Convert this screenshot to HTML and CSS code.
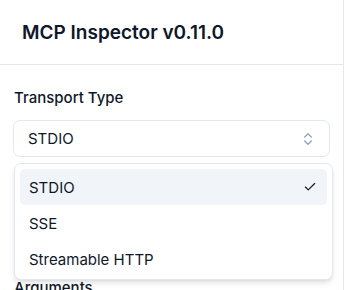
FILE: index.html
```
<!DOCTYPE html>
<html lang="en">
<head>
    <meta charset="UTF-8">
    <meta name="viewport" content="width=device-width, initial-scale=1.0">
    <title>MCP Inspector</title>
    <link rel="stylesheet" href="styles.css">
</head>
<body>
    <div class="sidebar">
        <div class="sidebar-header">
            <h1>MCP Inspector v0.11.0</h1>
        </div>
        <div class="sidebar-body">
            <div class="form-group">
                <label>Transport Type</label>
                <div class="select-wrap">
                    <button class="select-trigger">
                        <span>STDIO</span>
                        <svg class="chevrons" width="16" height="16" viewBox="0 0 24 24" fill="none" stroke="currentColor" stroke-width="2" stroke-linecap="round" stroke-linejoin="round"><path d="m7 15 5 5 5-5"/><path d="m7 9 5-5 5 5"/></svg>
                    </button>
                    <div class="select-menu">
                        <div class="select-item active">
                            <span>STDIO</span>
                            <svg width="14" height="14" viewBox="0 0 24 24" fill="none" stroke="currentColor" stroke-width="2" stroke-linecap="round" stroke-linejoin="round"><path d="M20 6 9 17l-5-5"/></svg>
                        </div>
                        <div class="select-item"><span>SSE</span></div>
                        <div class="select-item"><span>Streamable HTTP</span></div>
                    </div>
                </div>
            </div>
            <!-- command field sits under the open menu -->
            <div class="form-group args">
                <label>Arguments</label>
                <input type="text" class="text-input">
            </div>
        </div>
    </div>
</body>
</html>
```

FILE: styles.css
```
body {
    margin: 0;
    font-family: Inter, "Noto Sans", sans-serif;
    color: #0f172a;
    background-color: white;
}
.sidebar {
    width: 343px;
    height: 100vh;
    border-right: 1px solid #e5e7eb;
    overflow: hidden;
}
.sidebar-header {
    height: 64px;
    border-bottom: 1px solid #e5e7eb;
    display: flex;
    align-items: center;
    padding-left: 22px;
}
.sidebar-header h1 {
    margin: 0;
    font-size: 19px;
    font-weight: 600;
}
.sidebar-body {
    padding: 24px 13px 0 13px;
    display: flex;
    flex-direction: column;
    gap: 18px;
}
.form-group label {
    display: block;
    font-size: 15px;
    line-height: 18px;
    font-weight: 500;
    margin-bottom: 13px;
    padding-left: 1px;
}
.form-group.args {
    margin-top: 104px;
}
.select-wrap {
    position: relative;
}
.select-trigger {
    width: 100%;
    height: 37px;
    display: flex;
    align-items: center;
    justify-content: space-between;
    padding: 0 13px 0 14px;
    border: 1px solid #e2e8f0;
    border-radius: 7px;
    background: white;
    font-family: inherit;
    font-size: 15px;
    color: #0f172a;
}
.chevrons {
    color: #94a3b8;
}
.select-menu {
    position: absolute;
    top: 43px;
    left: 1px;
    width: 319px;
    box-sizing: border-box;
    padding: 5px 5px 2px 5px;
    background: white;
    border: 1px solid #e2e8f0;
    border-radius: 7px;
    box-shadow: 0 4px 6px -1px rgba(0,0,0,0.1), 0 2px 4px -2px rgba(0,0,0,0.1);
    z-index: 10;
}
.select-item {
    height: 36px;
    display: flex;
    align-items: center;
    justify-content: space-between;
    padding: 0 10px 0 9px;
    border-radius: 5px;
    font-size: 15px;
}
.select-item.active {
    background-color: #f1f5f9;
}
.text-input {
    width: 100%;
    height: 37px;
    box-sizing: border-box;
    border: 1px solid #e2e8f0;
    border-radius: 7px;
}
```
